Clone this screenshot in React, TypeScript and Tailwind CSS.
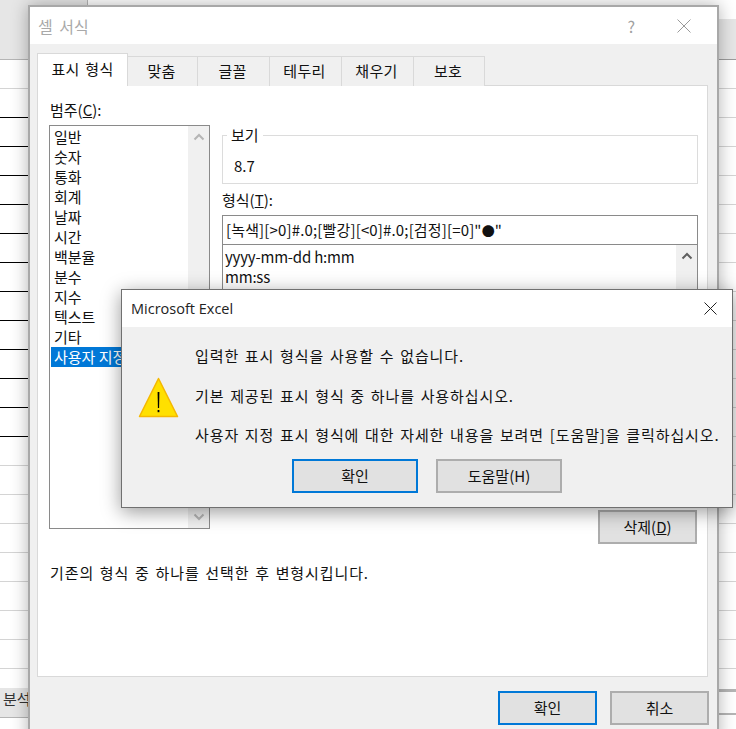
const font = { fontFamily: '"Noto Sans CJK KR", sans-serif' };

const sheetRows = [
  false, true, true, true, true, true, true, true, true, true, true, true, true,
  false, false, false, false, false, false, false, false,
];

const categories = ['일반', '숫자', '통화', '회계', '날짜', '시간', '백분율', '분수', '지수', '텍스트', '기타', '사용자 지정'];

function Chevron({ up, color }: { up?: boolean; color: string }) {
  return (
    <svg width="12" height="8" viewBox="0 0 12 8" fill="none" stroke={color} strokeWidth="2">
      <path d={up ? 'M1.5 6.5 6 2l4.5 4.5' : 'M1.5 1.5 6 6l4.5-4.5'} />
    </svg>
  );
}

function WinButton({ children, primary, wide }: { children: React.ReactNode; primary?: boolean; wide?: boolean }) {
  return (
    <div
      className={`flex items-center justify-center h-[34px] bg-[#e1e1e1] text-[15px] text-[#111] ${wide ? 'w-[126px]' : 'w-[99px]'} ${
        primary ? 'border-2 border-[#0078d7]' : 'border-2 border-[#adadad]'
      }`}
    >
      {children}
    </div>
  );
}

function Tab({ label, width, active }: { label: string; width: string; active?: boolean }) {
  return (
    <div
      className={`flex items-center justify-center border-l border-t border-r text-[15px] text-[#111] tracking-[0.3px] [word-spacing:2px] ${width} ${
        active
          ? 'h-[33px] bg-white border-[#d9d9d9] relative z-10 pb-[2px]'
          : 'h-[30px] mt-[3px] bg-[#f0f0f0] border-[#d9d9d9] -ml-px pr-[2px]'
      }`}
    >
      {label}
    </div>
  );
}

function SheetBackground() {
  return (
    <div className="flex flex-col">
      <div className="flex h-[60px]">
        <div className="w-[88px] bg-[#e6e6e6] border-r border-[#b5b5b5] border-b" />
        <div className="flex-1 flex flex-col">
          <div className="h-[19px] bg-white" />
          <div className="flex-1 bg-[#e6e6e6] border-b border-[#9c9c9c]" />
        </div>
      </div>
      {sheetRows.map((black, i) => (
        <div key={i} className="flex h-[29px]">
          <div className={`w-[88px] border-b ${black ? 'border-black' : 'border-[#d4d4d4]'}`} />
          <div className="flex-1 border-b border-[#d4d4d4]" />
        </div>
      ))}
      <div className="flex h-[50px]">
        <div className="w-[88px] flex flex-col">
          <div className="h-[19px]" />
          <div className="h-[30px] bg-[#e6e6e6] border-b border-[#b5b5b5] text-[15px] text-[#333] pl-[3px] leading-[22px]">
            분석
          </div>
        </div>
        <div className="flex-1 flex flex-col pt-[20px]">
          <div className="h-[3px] bg-[#b5b5b5]" />
          <div className="h-[21px]" />
          <div className="h-[2px] bg-[#b5b5b5]" />
        </div>
      </div>
    </div>
  );
}

function FormatCellsDialog() {
  return (
    <div className="absolute left-[28px] top-[5px] w-[691px] h-[740px] bg-[#f0f0f0] border-2 border-[#a8a8a8] shadow-[0_0_16px_rgba(0,0,0,0.3)]">
      <div className="h-[37px] bg-white flex items-center justify-between pl-[8px] pr-[26px]">
        <span className="text-[16px] text-[#a9a9a9] [word-spacing:3px]">셀 서식</span>
        <div className="flex items-center gap-[42px]">
          <span className="text-[16px] text-[#a0a0a0]">?</span>
          <svg width="14" height="14" viewBox="0 0 14 14" stroke="#9a9a9a" strokeWidth="1" fill="none">
            <path d="M.5.5l13 13M13.5.5l-13 13" />
          </svg>
        </div>
      </div>
      <div className="px-[7px] pt-[9px]">
        <div className="flex">
          <Tab label="표시 형식" width="w-[91px]" active />
          <Tab label="맞춤" width="w-[71px]" />
          <Tab label="글꼴" width="w-[73px]" />
          <Tab label="테두리" width="w-[73px]" />
          <Tab label="채우기" width="w-[73px]" />
          <Tab label="보호" width="w-[72px]" />
        </div>
        <div className="-mt-px h-[592px] w-[671px] bg-white border border-[#d9d9d9] pl-[11px] pr-[9px] pt-[14px] text-[15px] text-[#111]">
          <div className="flex gap-[12px]">
            <div className="w-[161px]">
              <div className="h-[25px] leading-[20px] pl-px">
                범주(<span className="underline">C</span>):
              </div>
              <div className="relative h-[404px] border border-[#8a8a8a] pl-[1px] flex">
                <div className="flex-1 pt-[1px]">
                  {categories.map((c, i) => (
                    <div key={c} className={`h-[20px] leading-[20px] pl-[3px] ${i === 11 ? 'bg-[#0078d7] text-white' : ''}`}>
                      {c}
                    </div>
                  ))}
                </div>
                <div className="w-[21px] bg-[#f0f0f0] flex flex-col items-center justify-between py-[7px]">
                  <Chevron up color="#b5b5b5" />
                  <Chevron color="#b5b5b5" />
                </div>
              </div>
            </div>
            <div className="w-[476px] pt-[35px]">
              <div className="relative h-[49px] border border-[#dcdcdc] pl-[11px] pt-[19px] leading-[22px]">
                <span className="absolute left-[4px] -top-[11px] bg-white px-[4px] leading-[20px]">보기</span>
                8.7
              </div>
              <div className="mt-[5px] h-[26px] leading-[22px]">
                형식(<span className="underline">T</span>):
              </div>
              <div className="h-[30px] border border-[#8a8a8a] pl-[3px] leading-[27px] whitespace-nowrap tracking-[0.15px]">
                [녹색][&gt;0]#.0;[빨강][&lt;0]#.0;[검정][=0]"<span className="text-[13px]">●</span>"
              </div>
              <div className="h-[240px] -mt-px border border-[#8a8a8a] flex">
                <div className="flex-1 pl-[2px] pt-[2px] leading-[20px] tracking-[-0.2px]">
                  <div>yyyy-mm-dd h:mm</div>
                  <div>mm:ss</div>
                </div>
                <div className="w-[21px] bg-[#f0f0f0] flex flex-col items-center pt-[7px]">
                  <Chevron up color="#606060" />
                </div>
              </div>
              <div className="flex justify-end mt-[26px] mr-px">
                <WinButton>
                  <span>
                    삭제(<span className="underline">D</span>)
                  </span>
                </WinButton>
              </div>
            </div>
          </div>
          <div className="mt-[19px] pl-px leading-[20px] tracking-[0.9px] [word-spacing:1.5px]">
            기존의 형식 중 하나를 선택한 후 변형시킵니다.
          </div>
        </div>
        <div className="flex justify-end gap-[13px] mt-[14px] pr-[1px]">
          <WinButton primary>확인</WinButton>
          <WinButton>취소</WinButton>
        </div>
      </div>
    </div>
  );
}

function AlertDialog() {
  return (
    <div className="absolute left-[121px] top-[289px] w-[612px] h-[219px] bg-[#f0f0f0] border border-[#707070] shadow-[0_4px_18px_rgba(0,0,0,0.4)]">
      <div className="h-[37px] bg-white flex items-center justify-between pl-[9px] pr-[15px]">
        <span className="text-[14.5px] text-[#222]" style={{ fontFamily: '"Open Sans", sans-serif' }}>
          Microsoft Excel
        </span>
        <svg width="13" height="13" viewBox="0 0 13 13" stroke="#222" strokeWidth="1" fill="none">
          <path d="M.5.5l12 12M12.5.5l-12 12" />
        </svg>
      </div>
      <div className="flex pl-[16px] pt-[19px]">
        <svg className="mt-[31px] shrink-0" width="41" height="41" viewBox="0 0 41 41">
          <path d="M20.5 1.5 39.5 39.5H1.5Z" fill="#ffe000" stroke="#f5b800" strokeWidth="1.5" strokeLinejoin="round" />
          <path d="M19.6 15h1.8l-.3 16h-1.2Z" fill="#000" />
          <rect x="19.6" y="33" width="1.8" height="2.2" fill="#000" />
        </svg>
        <div className="ml-[16px] text-[15px] text-[#111] tracking-[0.9px] [word-spacing:1.5px]">
          <div className="h-[20px] leading-[20px]">입력한 표시 형식을 사용할 수 없습니다.</div>
          <div className="h-[20px] leading-[20px] mt-[20px]">기본 제공된 표시 형식 중 하나를 사용하십시오.</div>
          <div className="h-[20px] leading-[20px] mt-[19px] whitespace-nowrap">
            사용자 지정 표시 형식에 대한 자세한 내용을 보려면 [도움말]을 클릭하십시오.
          </div>
        </div>
      </div>
      <div className="flex gap-[18px] pl-[170px] mt-[14px]">
        <WinButton primary wide>
          확인
        </WinButton>
        <WinButton wide>도움말(H)</WinButton>
      </div>
    </div>
  );
}

export default function App() {
  return (
    <div className="relative w-[736px] h-[729px] overflow-hidden bg-white" style={font}>
      <SheetBackground />
      <FormatCellsDialog />
      <AlertDialog />
    </div>
  );
}
